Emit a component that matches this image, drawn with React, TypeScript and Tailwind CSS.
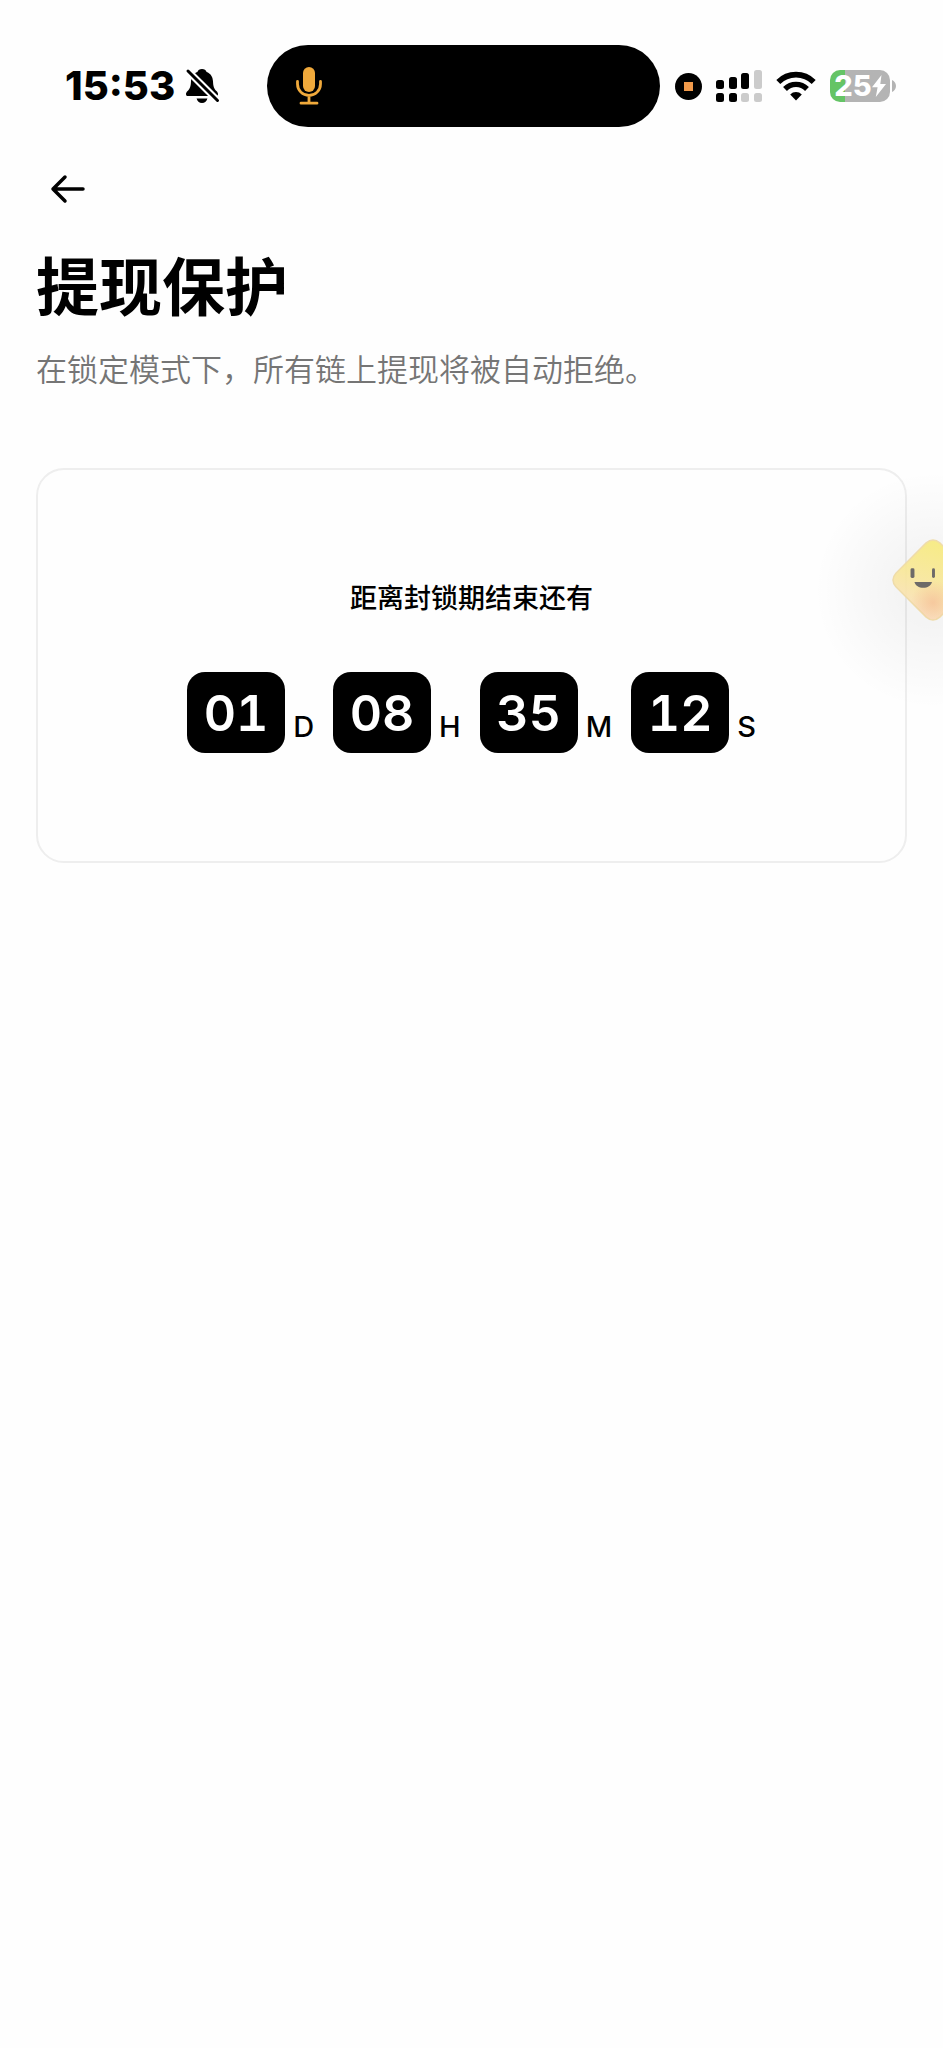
const countdown = [
  { value: "01", unit: "D" },
  { value: "08", unit: "H" },
  { value: "35", unit: "M" },
  { value: "12", unit: "S" },
];

function BellOffIcon() {
  return (
    <svg className="h-9 w-9 shrink-0" viewBox="0 0 36 36" aria-hidden="true">
      <path
        d="M18 1c-2.400 0-4 1.200-4.600 3C9.500 5.400 7.200 8.700 7 13.300c-.2 5.400-1 7.400-3.400 9.800C2.400 24.300 2 25.200 2 26.200c0 1.200.9 1.900 2.200 1.900h27.600c1.300 0 2.200-.7 2.200-1.900 0-1-.4-1.900-1.600-3.100-2.400-2.400-3.200-4.400-3.400-9.800-.2-4.600-2.500-7.900-6.400-9.300C22 2.200 20.400 1 18 1z"
        fill="#000"
      />
      <path d="M12.600 30.500h10.800c-.5 2.700-2.600 4.500-5.400 4.500s-4.900-1.800-5.400-4.500z" fill="#000" />
      <path d="M1.500.5l34 34" stroke="#fff" strokeWidth="7" />
      <path d="M4 3l29.500 29.500" stroke="#000" strokeWidth="3" strokeLinecap="round" />
    </svg>
  );
}

function MicIcon() {
  return (
    <svg className="h-10 w-7" viewBox="0 0 28 40" fill="none" aria-hidden="true">
      <rect x="8" y="1" width="12" height="25" rx="6" fill="#f0a93b" />
      <path
        d="M2.500 15.500V18a11.500 11.500 0 0 0 23 0v-2.500M14 29.500v7M6 37.200h16"
        stroke="#f0a93b"
        strokeWidth="2.800"
        strokeLinecap="round"
      />
    </svg>
  );
}

function SignalIcon() {
  return (
    <svg className="h-8 w-[46px]" viewBox="0 0 46 32" aria-hidden="true">
      <g fill="#000">
        <rect x="0" y="10" width="8" height="9" rx="2.500" />
        <rect x="13" y="7" width="8" height="12" rx="2.500" />
        <rect x="25" y="3" width="8" height="16" rx="2.500" />
        <rect x="0" y="23" width="8" height="9" rx="2.500" />
        <rect x="13" y="23" width="8" height="9" rx="2.500" />
      </g>
      <g fill="#cbcbcb">
        <rect x="38" y="0" width="8" height="19" rx="2.500" />
        <rect x="25" y="23" width="8" height="9" rx="2.500" />
        <rect x="38" y="23" width="8" height="9" rx="2.500" />
      </g>
    </svg>
  );
}

function WifiIcon() {
  return (
    <svg className="h-[30px] w-10" viewBox="0 0 40 30" fill="none" aria-hidden="true">
      <path d="M2.300 11A25 25 0 0 1 37.700 11" stroke="#000" strokeWidth="5.600" />
      <path d="M9 18a15.500 15.500 0 0 1 22 0" stroke="#000" strokeWidth="5.400" />
      <path d="M20 29.500l-5.800-6a8.200 8.200 0 0 1 11.600 0z" fill="#000" />
    </svg>
  );
}

function Battery() {
  return (
    <div className="flex items-center gap-0.5">
      <div className="flex h-8 w-[60px] items-center justify-center rounded-[10px] bg-linear-to-r from-[#65c466] from-25% to-[#b4b4b4] to-25%">
        <span className="text-[29px] leading-8 font-extrabold text-white">25</span>
        <svg className="h-[22px] w-3.5" viewBox="0 0 14 22" aria-hidden="true">
          <path d="M9.500 0L0 12.200h5.600L3.800 22 14 9H8.300z" fill="#fff" />
        </svg>
      </div>
      <svg className="h-3 w-1" viewBox="0 0 4 12" aria-hidden="true">
        <path d="M0 0c2.500 1 4 3.500 4 6s-1.500 5-4 6z" fill="#b4b4b4" />
      </svg>
    </div>
  );
}

function StatusBar() {
  return (
    <div className="flex items-center pt-[45px] pr-[47px] pl-[65px] font-[Inter,sans-serif]">
      <span className="text-[40px] leading-[48px] font-extrabold">15:53</span>
      <div className="ml-[9px]">
        <BellOffIcon />
      </div>
      <div className="mr-[15px] ml-[47px] flex h-[82px] flex-1 items-center rounded-full bg-black pl-7">
        <MicIcon />
      </div>
      <div className="flex items-center gap-3.5">
        <div className="flex h-[27px] w-[27px] items-center justify-center rounded-full bg-black">
          <div className="h-[9px] w-[9px] bg-[#f19a4b]" />
        </div>
        <SignalIcon />
        <WifiIcon />
        <Battery />
      </div>
    </div>
  );
}

// Assistant bubble docked to the right edge, partly off screen
function Mascot() {
  return (
    <>
      <div className="pointer-events-none absolute top-[470px] -right-[110px] h-[240px] w-[240px] rounded-full bg-radial from-black/4 from-20% to-transparent to-70%" />
      <button
        type="button"
        aria-label="助手"
        className="absolute top-[539px] -right-[31px] h-[82px] w-[82px]"
      >
        <svg className="h-full w-full" viewBox="0 0 84 84" aria-hidden="true">
          <defs>
            <linearGradient id="face" x1="0.65" y1="0" x2="0.35" y2="1">
              <stop offset="0.1" stopColor="#f7ea7e" />
              <stop offset="0.5" stopColor="#f8e798" />
              <stop offset="1" stopColor="#fbdfc2" />
            </linearGradient>
            <radialGradient id="blush" cx="0.5" cy="0.78" r="0.28">
              <stop offset="0" stopColor="#f5bd94" stopOpacity="0.7" />
              <stop offset="1" stopColor="#f5bd94" stopOpacity="0" />
            </radialGradient>
          </defs>
          <path
            d="M35 4q7-6 14 0l31 31q6 7 0 14L49 80q-7 6-14 0L4 49q-6-7 0-14z"
            fill="url(#face)"
            fillOpacity="0.900"
            stroke="#efdcaa"
            strokeWidth="1.500"
          />
          <path d="M35 4q7-6 14 0l31 31q6 7 0 14L49 80q-7 6-14 0L4 49q-6-7 0-14z" fill="url(#blush)" />
          <rect x="19" y="30" width="4" height="10" rx="1.500" fill="#6d6a68" />
          <rect x="41" y="30" width="3" height="10" rx="1.500" fill="#6d6a68" />
          <path d="M23 44h18c-1 3.700-4.600 6-9 6s-8-2.300-9-6z" fill="#6d6a68" />
        </svg>
      </button>
    </>
  );
}

export default function App() {
  return (
    <div className="relative min-h-screen overflow-hidden bg-[#fefefe] font-['Noto_Sans_CJK_SC',sans-serif] text-black">
      <StatusBar />

      <main className="px-9">
        <button type="button" aria-label="返回" className="mt-10 ml-2.5 flex h-11 w-11 items-center justify-center">
          <svg className="h-8 w-9" viewBox="0 0 36 32" fill="none" aria-hidden="true">
            <path
              d="M33 16H3M15 4L3 16l12 12"
              stroke="#000"
              strokeWidth="3.500"
              strokeLinecap="round"
              strokeLinejoin="round"
            />
          </svg>
        </button>

        <h1 className="mt-[34px] text-[63px] leading-[76px] font-bold">提现保护</h1>
        <p className="mt-[23px] text-[31px] leading-[48px] font-[350] text-[#757575]">
          在锁定模式下，所有链上提现将被自动拒绝。
        </p>

        <section className="mt-[76px] flex flex-col items-center rounded-[28px] border-2 border-[#eeeeee] px-4 pt-[107px] pb-[108px]">
          <h2 className="text-[27px] leading-10 font-medium">距离封锁期结束还有</h2>

          <div className="mt-[55px] flex gap-[19px] font-[Inter,sans-serif]">
            {countdown.map((item) => (
              <div key={item.unit} className="flex items-end gap-2">
                <span className="flex h-[81px] w-[98px] items-center justify-center rounded-[18px] bg-black text-[50px] leading-none font-semibold text-white tabular-nums">
                  {item.value}
                </span>
                <span className="pb-2 text-[29px] leading-9 font-medium">{item.unit}</span>
              </div>
            ))}
          </div>
        </section>
      </main>

      <Mascot />
    </div>
  );
}
